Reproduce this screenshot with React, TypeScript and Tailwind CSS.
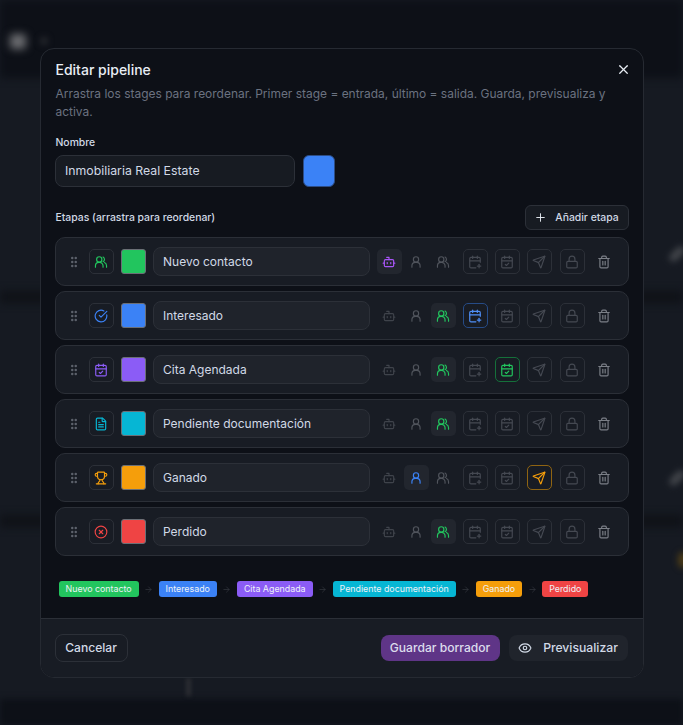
import React from "react";
import { Bot, CalendarPlus, CalendarCheck, Send, Lock, Trash2, GripVertical, CircleCheckBig, FileText, Trophy, CircleX, X, Plus, Eye, ArrowRight } from "lucide-react";

type IconType = React.ComponentType<{ size?: number; strokeWidth?: number; className?: string }>;

const PersonIcon: IconType = ({ size = 14, strokeWidth = 2, className }) => (
  <svg width={size} height={size} viewBox="0 0 24 24" fill="none" stroke="currentColor" strokeWidth={strokeWidth} strokeLinecap="round" strokeLinejoin="round" className={className}>
    <circle cx="12" cy="7.5" r="4.5" />
    <path d="M5 21v-2.5a6 6 0 0 1 6-6h2a6 6 0 0 1 6 6V21" />
  </svg>
);

const PeopleIcon: IconType = ({ size = 14, strokeWidth = 2, className }) => (
  <svg width={size} height={size} viewBox="0 0 24 24" fill="none" stroke="currentColor" strokeWidth={strokeWidth} strokeLinecap="round" strokeLinejoin="round" className={className}>
    <circle cx="9" cy="7.5" r="4.5" />
    <path d="M2.5 21v-2.5a6 6 0 0 1 6-6h1a6 6 0 0 1 6 6V21" />
    <path d="M15.5 3.5a4.5 4.5 0 0 1 0 8" />
    <path d="M21.5 21v-2.5a6 6 0 0 0-3.5-5.5" />
  </svg>
);

type Stage = { name: string; color: string; text: string; Icon: IconType; bot?: boolean; person?: boolean; users?: boolean; plus?: boolean; check?: boolean; send?: boolean };

const stages: Stage[] = [
  { name: "Nuevo contacto", color: "bg-[#22c55e]", text: "text-[#22c55e]", Icon: PeopleIcon, bot: true },
  { name: "Interesado", color: "bg-[#3b82f6]", text: "text-[#3b82f6]", Icon: CircleCheckBig, users: true, plus: true },
  { name: "Cita Agendada", color: "bg-[#8b5cf6]", text: "text-[#8b5cf6]", Icon: CalendarCheck, users: true, check: true },
  { name: "Pendiente documentación", color: "bg-[#06b6d4]", text: "text-[#06b6d4]", Icon: FileText, users: true },
  { name: "Ganado", color: "bg-[#f59e0b]", text: "text-[#f59e0b]", Icon: Trophy, person: true, send: true },
  { name: "Perdido", color: "bg-[#ef4444]", text: "text-[#ef4444]", Icon: CircleX, users: true },
];

function Toggle({ Icon, on, cls, off }: { Icon: IconType; on?: boolean; cls: string; off: string }) {
  return (
    <div className={`w-[25px] h-[25px] rounded-[5px] flex items-center justify-center ${on ? `bg-[#22262e] ${cls}` : off}`}>
      <Icon size={14} strokeWidth={2} />
    </div>
  );
}

function Boxed({ Icon, on, cls }: { Icon: IconType; on?: boolean; cls: string }) {
  return (
    <div className={`w-[25px] h-[25px] rounded-[5px] border flex items-center justify-center ${on ? cls : "border-[#2c3038] text-[#454952]"}`}>
      <Icon size={14} strokeWidth={2} />
    </div>
  );
}

function Row({ s }: { s: Stage }) {
  return (
    <div className="h-[49px] rounded-[10px] border border-[#2b2f37] bg-[#181c24] flex items-center pl-[11px]">
      <GripVertical size={14} strokeWidth={2.25} className="text-[#5d626c] mr-[8px]" />
      <div className={`w-[25px] h-[25px] rounded-[5px] border border-[#2c3038] flex items-center justify-center ${s.text}`}>
        <s.Icon size={14} strokeWidth={2} />
      </div>
      <div className={`ml-[7px] w-[25px] h-[25px] rounded-[3px] border border-[#6b6f76] ${s.color}`} />
      <div className="ml-[7px] w-[217px] h-[29px] rounded-[8px] border border-[#2c3038] bg-[#1f232b] flex items-center pl-[9.5px] text-[12px] text-[#d1d9e6]">
        {s.name}
      </div>
      <div className="ml-[7px] flex gap-[2px]">
        <Toggle Icon={Bot} on={s.bot} cls="text-[#a855f7]" off="text-[#3f434b]" />
        <Toggle Icon={PersonIcon} on={s.person} cls="text-[#3b82f6]" off="text-[#50545c]" />
        <Toggle Icon={PeopleIcon} on={s.users} cls="text-[#22c55e]" off="text-[#50545c]" />
      </div>
      <div className="ml-[7px] flex gap-[7px]">
        <Boxed Icon={CalendarPlus} on={s.plus} cls="border-[#264b86] text-[#4f8ff7]" />
        <Boxed Icon={CalendarCheck} on={s.check} cls="border-[#15703a] text-[#22c55e]" />
        <Boxed Icon={Send} on={s.send} cls="border-[#8f6412] text-[#f59e0b]" />
        <div className="ml-px">
          <Boxed Icon={Lock} cls="" />
        </div>
      </div>
      <Trash2 size={14} strokeWidth={2} className="ml-[12px] text-[#7b7f87]" />
    </div>
  );
}

export default function App() {
  return (
    <div className="relative w-[683px] h-[725px] overflow-hidden bg-[#161a22] [font-family:Inter,sans-serif] flex items-center justify-center">
      {/* blurred page behind the dialog */}
      <div className="absolute inset-x-0 top-0 h-[78px] bg-[#0d1017] blur-[4px]" />
      <div className="absolute inset-x-0 top-[291px] h-[12px] bg-[#0f1217] blur-[4px]" />
      <div className="absolute inset-x-0 top-[515px] h-[12px] bg-[#0f1217] blur-[4px]" />
      <div className="absolute inset-x-0 bottom-0 h-[26px] bg-[#0d1017] blur-[3px]" />
      <div className="absolute left-[10px] top-[34px] w-[16px] h-[15px] rounded-[3px] bg-[#6d6e72] blur-[4px]" />
      <div className="absolute left-[40px] top-[37px] w-[8px] h-[8px] rounded-full bg-[#26282e] blur-[3px]" />
      <div className="absolute left-[668px] top-[250px] w-[18px] h-[8px] -rotate-45 rounded-full bg-[#43464b] blur-[3px]" />
      <div className="absolute left-[668px] top-[474px] w-[18px] h-[8px] -rotate-45 rounded-full bg-[#43464b] blur-[3px]" />
      <div className="absolute left-[678px] top-[552px] w-[10px] h-[16px] rounded-full bg-[#4b3b17] blur-[3px]" />
      <div className="absolute left-[186px] top-[678px] w-[5px] h-[18px] bg-[#2c2e33] blur-[2px]" />

      <div className="relative mt-[1px] w-[604px] h-[630px] rounded-[14px] border border-[#262a32] bg-[#0d1017] flex flex-col overflow-hidden">
        <div className="flex-1 px-[14px] pt-[11px]">
          <div className="flex items-start justify-between">
            <h2 className="pl-px text-[14px] leading-[20px] font-medium text-[#e8edf4]">Editar pipeline</h2>
            <X size={15} strokeWidth={2} className="mt-[2px] -mr-[2px] text-[#e8edf4]" />
          </div>
          <p className="mt-[5px] pl-px text-[11.96px] leading-[18px] text-[#6b7280]">
            Arrastra los stages para reordenar. Primer stage = entrada, último = salida. Guarda, previsualiza y activa.
          </p>
          <div className="mt-[14px] pl-px text-[10.4px] leading-[16px] font-medium text-[#d1d9e6]">Nombre</div>
          <div className="mt-[4px] flex gap-[8px]">
            <div className="w-[240px] h-[32px] rounded-[8px] border border-[#2c3038] bg-[#171b22] flex items-center pl-[9.5px] text-[12.3px] text-[#d1d9e6]">
              Inmobiliaria Real Estate
            </div>
            <div className="w-[32px] h-[32px] rounded-[6px] border border-[#2d4d85] bg-[#3b82f6]" />
          </div>
          <div className="mt-[18px] flex items-center justify-between">
            <div className="pl-px text-[10.4px] font-medium text-[#d1d9e6]">Etapas (arrastra para reordenar)</div>
            <div className="h-[25px] w-[104px] rounded-[6px] border border-[#2c3038] bg-[#171b22] flex items-center justify-center gap-[8px] text-[10.4px] font-medium text-[#d1d9e6]">
              <Plus size={13} strokeWidth={1.75} className="text-[#e8edf4]" />
              Añadir etapa
            </div>
          </div>
          <div className="mt-[7px] flex flex-col gap-[5px]">
            {stages.map((s) => (
              <Row key={s.name} s={s} />
            ))}
          </div>
          <div className="mt-[25px] pl-[4px] flex items-center gap-[5px]">
            {stages.map((s, i) => (
              <React.Fragment key={s.name}>
                {i > 0 && <ArrowRight size={9} strokeWidth={1.5} className="mx-[0.5px] text-[#3c4048]" />}
                <div className={`h-[16px] rounded-[3px] px-[7px] flex items-center text-[8.85px] font-normal text-[#eef2f7] ${s.color}`}>{s.name}</div>
              </React.Fragment>
            ))}
          </div>
        </div>
        <div className="h-[59px] shrink-0 border-t border-[#2b2f37] bg-[#181c24] pl-[14px] pr-[15px] flex items-center justify-between">
          <div className="h-[28px] w-[73px] rounded-[8px] border border-[#2c3038] flex items-center justify-center text-[12.1px] font-medium text-[#d1d9e6]">Cancelar</div>
          <div className="flex gap-[9px]">
            <div className="h-[26px] w-[119px] rounded-[8px] bg-[#5f3587] flex items-center justify-center text-[12.1px] font-medium text-[#dcdcec]">Guardar borrador</div>
            <div className="h-[26px] w-[119px] rounded-[8px] bg-[#20242c] flex items-center justify-center gap-[11px] text-[12.2px] font-medium text-[#d1d9e6]">
              <Eye size={14} strokeWidth={2} />
              Previsualizar
            </div>
          </div>
        </div>
      </div>
    </div>
  );
}
